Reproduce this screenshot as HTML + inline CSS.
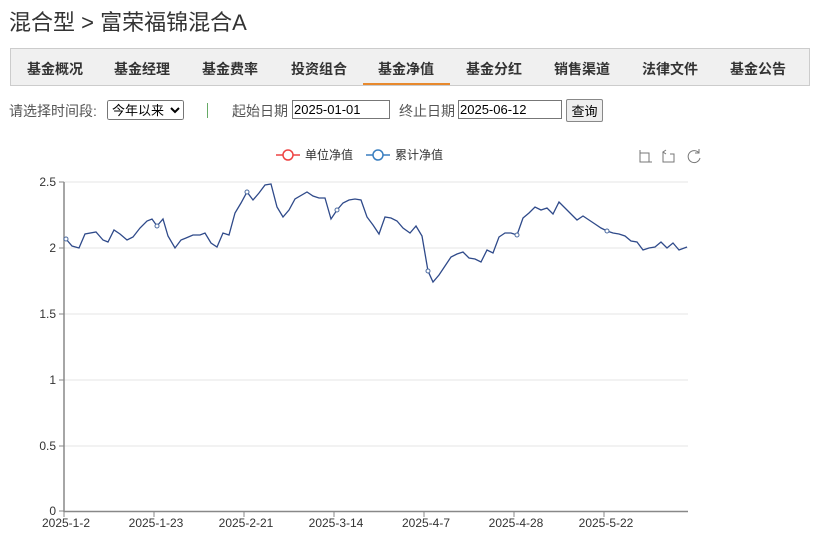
<!DOCTYPE html>
<html><head><meta charset="utf-8"><style>
body{margin:0;background:#fff;font-family:"Liberation Sans","Noto Sans CJK SC",sans-serif;width:822px;height:547px;overflow:hidden;position:relative}
.t{position:absolute;left:9px;top:5px;font-size:22px;color:#333}
.nav{position:absolute;left:10px;top:48px;width:798px;height:36px;background:#f0f0f0;border:1px solid #ccc}
.nav span{position:absolute;top:10px;font-size:14px;font-weight:bold;color:#333;transform:translateX(-50%);white-space:nowrap}
.ul{position:absolute;left:352px;top:34px;width:87px;height:2px;background:#e8892d}
.f{position:absolute;top:101px;font-size:14px;color:#555}
input,select,button{font-family:"Liberation Sans","Noto Sans CJK SC",sans-serif;font-size:13px}
</style></head><body>
<div class="t">混合型 &gt; 富荣福锦混合A</div>
<div class="nav">
<span style="left:44px">基金概况</span><span style="left:131px">基金经理</span><span style="left:219px">基金费率</span><span style="left:308px">投资组合</span><span style="left:395px">基金净值</span><span style="left:483px">基金分红</span><span style="left:571px">销售渠道</span><span style="left:659px">法律文件</span><span style="left:747px">基金公告</span>
<div class="ul"></div></div>
<div class="f" style="left:9px">请选择时间段:</div>
<select style="position:absolute;left:107px;top:100px;width:77px;height:20px;padding:0">
<option>今年以来</option></select>
<div style="position:absolute;left:207px;top:103px;width:1px;height:15px;background:#6a6"></div>
<div class="f" style="left:232px">起始日期</div>
<input style="position:absolute;left:292px;top:100px;width:98px;height:19px;padding:0 1px;border:1px solid #777;box-sizing:border-box" value="2025-01-01">
<div class="f" style="left:399px">终止日期</div>
<input style="position:absolute;left:458px;top:100px;width:104px;height:19px;padding:0 1px;border:1px solid #777;box-sizing:border-box" value="2025-06-12">
<button style="position:absolute;left:566px;top:99px;width:37px;height:23px;padding:0;border:1px solid #888;background:#eee;border-radius:2px">查询</button>
<svg style="position:absolute;left:0;top:0" width="822" height="547" font-family="Liberation Sans, Noto Sans CJK SC, sans-serif">
<g stroke="#e6e6e6"><line x1="64" x2="688" y1="182" y2="182"/><line x1="64" x2="688" y1="248" y2="248"/><line x1="64" x2="688" y1="314" y2="314"/><line x1="64" x2="688" y1="380" y2="380"/><line x1="64" x2="688" y1="446" y2="446"/></g>
<g stroke="#888" stroke-width="1.5"><line x1="64" y1="182" x2="64" y2="512"/><line x1="64" y1="511.5" x2="688" y2="511.5"/></g>
<g stroke="#888"><line x1="59" x2="64" y1="182" y2="182"/><line x1="59" x2="64" y1="248" y2="248"/><line x1="59" x2="64" y1="314" y2="314"/><line x1="59" x2="64" y1="380" y2="380"/><line x1="59" x2="64" y1="446" y2="446"/><line x1="59" x2="64" y1="511" y2="511"/>
<line x1="64" x2="64" y1="512" y2="517"/><line x1="154" x2="154" y1="512" y2="517"/><line x1="244" x2="244" y1="512" y2="517"/><line x1="334" x2="334" y1="512" y2="517"/><line x1="424" x2="424" y1="512" y2="517"/><line x1="514" x2="514" y1="512" y2="517"/><line x1="604" x2="604" y1="512" y2="517"/></g>
<g font-size="12" fill="#333" text-anchor="end"><text x="56" y="186">2.5</text><text x="56" y="252">2</text><text x="56" y="318">1.5</text><text x="56" y="384">1</text><text x="56" y="450">0.5</text><text x="56" y="515">0</text></g>
<g font-size="12" fill="#333" text-anchor="middle"><text x="66" y="527">2025-1-2</text><text x="156" y="527">2025-1-23</text><text x="246" y="527">2025-2-21</text><text x="336" y="527">2025-3-14</text><text x="426" y="527">2025-4-7</text><text x="516" y="527">2025-4-28</text><text x="606" y="527">2025-5-22</text></g>
<polyline fill="none" stroke="#2f4a8a" stroke-width="1.3" points="66,239 72,246 79,248 85,234 96,232 103,240 108,242 114,230 120,234 127,240 133,237 140,228 147,221 152,219 157,226 163,219 168,236 175,248 181,240 186,238 193,235 200,235 205,233 211,243 217,247 223,233 229,235 235,213 241,203 247,192 253,200 259,193 265,185 271,184 277,207 283,217 289,210 295,199 307,192 313,196 319,198 325,198 331,219 337,210 343,203 349,200 355,199 361,200 367,217 373,225 379,234 385,217 391,218 397,221 403,228 410,233 416,226 422,236 428,271 433,282 439,275 445,266 451,257 457,254 463,252 469,258 475,259 481,262 487,250 493,253 499,237 505,233 511,233 517,235 523,218 529,213 535,207 541,210 547,208 553,214 559,202 565,208 571,214 577,220 583,216 589,220 595,224 601,228 607,231 613,233 619,234 625,236 631,241 637,242 643,250 649,248 655,247 661,242 667,248 673,243 679,250 687,247"/>
<g fill="#fff" stroke="#4a6aa0"><circle cx="66" cy="239" r="2"/><circle cx="157" cy="226" r="2"/><circle cx="247" cy="192" r="2"/><circle cx="337" cy="210" r="2"/><circle cx="428" cy="271" r="2"/><circle cx="517" cy="235" r="2"/><circle cx="607" cy="231" r="2"/></g>
<line x1="276" x2="300" y1="155" y2="155" stroke="#e44" stroke-width="1.5"/><circle cx="288" cy="155" r="5" fill="#fff" stroke="#e44" stroke-width="1.5"/>
<text x="305" y="159" font-size="12" fill="#333">单位净值</text>
<line x1="366" x2="390" y1="155" y2="155" stroke="#3a7fc0" stroke-width="1.5"/><circle cx="378" cy="155" r="5" fill="#fff" stroke="#3a7fc0" stroke-width="1.5"/>
<text x="395" y="159" font-size="12" fill="#333">累计净值</text>
<g fill="none" stroke="#777" stroke-width="1"><path d="M640 150v12h12M640 153h9v9"/><path d="M663 152v10h11V154h-4M666 150l-3 2 3 2"/><path d="M699 153a6 6 0 1 0 1 5M699 149v4h-4"/></g>
</svg>
</body></html>
